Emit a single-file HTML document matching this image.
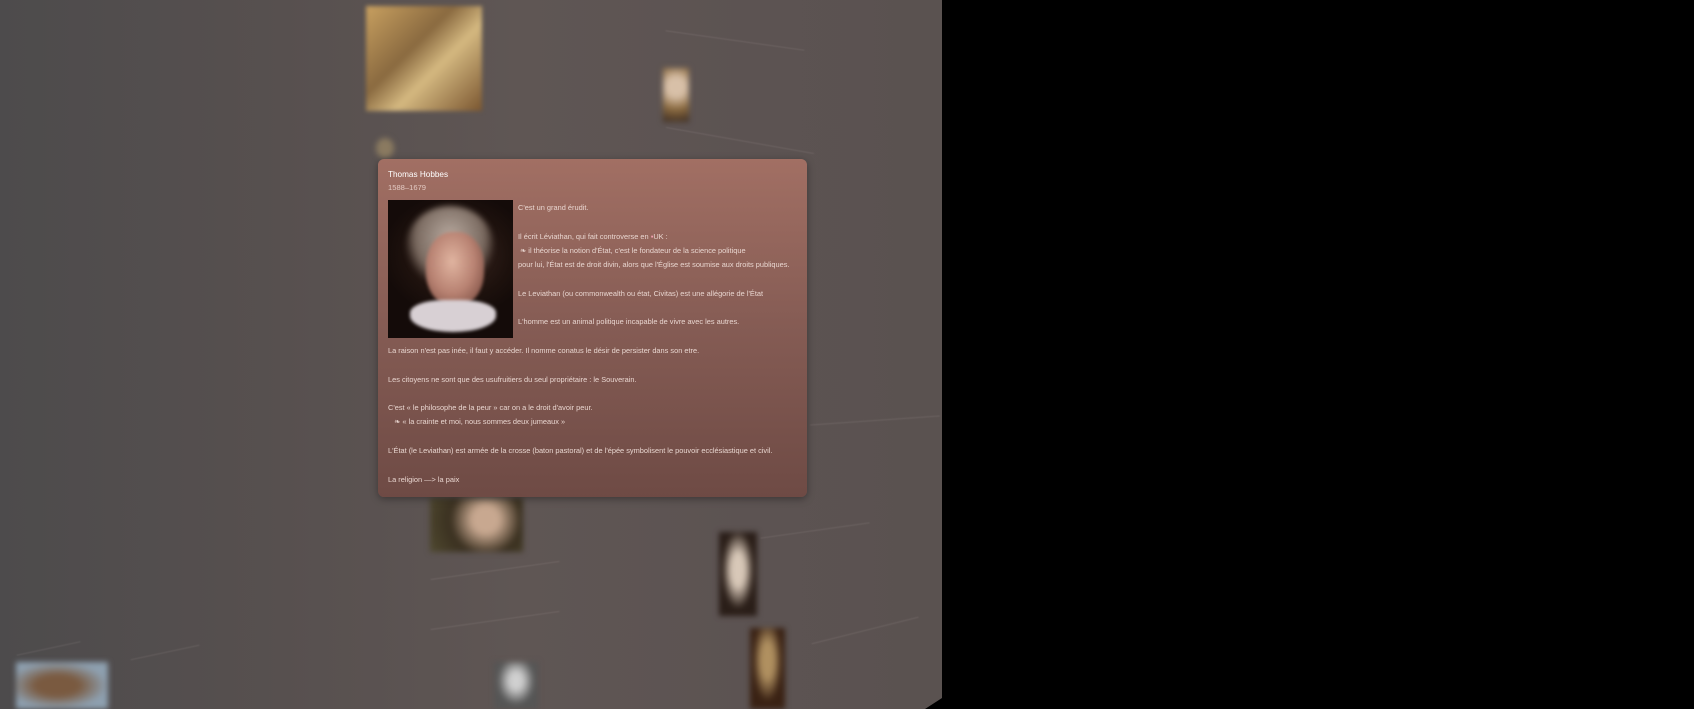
<!DOCTYPE html>
<html><head><meta charset="utf-8"><style>
html,body{margin:0;padding:0;background:#000;width:1694px;height:709px;overflow:hidden;font-family:"Liberation Sans",sans-serif}
#page{position:absolute;left:0;top:0;width:942px;height:709px;overflow:hidden;
 background:linear-gradient(90deg,#4d4b4c 0%,#57504f 30%,#5f5654 55%,#5c5352 80%,#5a5250 100%);
 clip-path:polygon(0 0,942px 0,942px 698px,925px 709px,0 709px)}
.b{position:absolute;filter:blur(3px)}
.t{position:absolute;height:1px;background:rgba(210,195,190,.13);filter:blur(0.6px)}
#card{position:absolute;left:378px;top:159px;width:429px;height:338px;border-radius:6px;
 background:linear-gradient(180deg,rgba(164,112,100,.97) 0%,rgba(135,92,84,.95) 50%,rgba(111,74,68,.96) 100%);
 color:#e9d6d0;font-size:7.4px;line-height:14.3px;box-shadow:0 2px 8px rgba(0,0,0,.35)}
#card .in{position:absolute;left:10px;top:10px;right:8px}
.h{color:#fff;font-size:8.2px;line-height:12px}
.d{color:#e3c9c2;font-size:7.6px;line-height:13px}
#ph{float:left;width:125px;height:138px;margin:6px 5px 2px 0;position:relative;overflow:hidden;
 background:radial-gradient(ellipse 60% 45% at 55% 40%,#3a2620 0%,#1d110d 70%,#140b09 100%)}
p{margin:0}
</style></head><body>
<div id="page">
 <div class="b" style="left:366px;top:6px;width:116px;height:105px;background:linear-gradient(135deg,#c8a060,#8a6a40 40%,#d4b880 60%,#7a5630);filter:blur(2px)"></div>
 <div class="b" style="left:663px;top:68px;width:26px;height:54px;background:radial-gradient(circle at 50% 35%,#d8c0a8 0 25%,#8a6a40 60%,#3a2a20)"></div>
 <div class="b" style="left:376px;top:138px;width:18px;height:20px;background:#8a7a60;border-radius:50%"></div>
 <div class="b" style="left:430px;top:498px;width:93px;height:54px;background:radial-gradient(circle at 60% 40%,#c8a890 0 20%,#3a3020 55%,#504a30)"></div>
 <div class="b" style="left:719px;top:532px;width:38px;height:84px;background:radial-gradient(ellipse at 50% 45%,#d8c8b8 0 25%,#2a1e18 60%)"></div>
 <div class="b" style="left:750px;top:628px;width:35px;height:81px;background:radial-gradient(ellipse at 50% 40%,#b09060 0 25%,#3a2214 60%)"></div>
 <div class="b" style="left:494px;top:662px;width:44px;height:47px;background:radial-gradient(ellipse at 50% 40%,#d0d0d0 0 20%,#555 60%)"></div>
 <div class="b" style="left:16px;top:662px;width:92px;height:47px;background:radial-gradient(ellipse at 45% 50%,#7a5a40 0 30%,#8ea0b0 70%)"></div>
 <div class="t" style="left:16px;top:648px;width:65px;transform:rotate(-12deg)"></div>
 <div class="t" style="left:130px;top:652px;width:70px;transform:rotate(-12deg)"></div>
 <div class="t" style="left:665px;top:40px;width:140px;transform:rotate(8deg)"></div>
 <div class="t" style="left:665px;top:140px;width:150px;transform:rotate(10deg)"></div>
 <div class="t" style="left:430px;top:570px;width:130px;transform:rotate(-8deg)"></div>
 <div class="t" style="left:430px;top:620px;width:130px;transform:rotate(-8deg)"></div>
 <div class="t" style="left:810px;top:630px;width:110px;transform:rotate(-14deg)"></div>
 <div class="t" style="left:760px;top:530px;width:110px;transform:rotate(-8deg)"></div>
 <div class="t" style="left:810px;top:420px;width:130px;transform:rotate(-4deg)"></div>
</div>
<div id="card"><div class="in">
 <div class="h">Thomas Hobbes</div>
 <div class="d">1588–1679</div>
 <div id="ph">
  <div style="position:absolute;left:18px;top:6px;width:88px;height:80px;border-radius:50%;background:radial-gradient(ellipse at 50% 40%,#b8aaa0 0%,#7a6a60 55%,transparent 75%);filter:blur(3px)"></div>
  <div style="position:absolute;left:38px;top:32px;width:58px;height:74px;border-radius:45%;background:radial-gradient(ellipse at 45% 40%,#e0b4a0 0%,#b88272 50%,#6a3e34 100%);filter:blur(1.5px)"></div>
  <div style="position:absolute;left:22px;top:100px;width:86px;height:32px;border-radius:40% 40% 50% 50%;background:#d8d0d4;filter:blur(1.5px)"></div>
 </div>
 <p style="padding-top:7px">C'est un grand érudit.</p><p>&nbsp;</p>
 <p>Il écrit Léviathan, qui fait controverse en <span style="color:#f0a0b0">▪</span>UK :</p>
 <p>&nbsp;❧ il théorise la notion d'État, c'est le fondateur de la science politique</p>
 <p>pour lui, l'État est de droit divin, alors que l'Église est soumise aux droits publiques.</p><p>&nbsp;</p>
 <p>Le Leviathan (ou commonwealth ou état, Civitas) est une allégorie de l'État</p><p>&nbsp;</p>
 <p>L'homme est un animal politique incapable de vivre avec les autres.</p><p>&nbsp;</p>
 <p style="clear:both">La raison n'est pas inée, il faut y accéder. Il nomme conatus le désir de persister dans son etre.</p><p>&nbsp;</p>
 <p>Les citoyens ne sont que des usufruitiers du seul propriétaire : le Souverain.</p><p>&nbsp;</p>
 <p>C'est « le philosophe de la peur » car on a le droit d'avoir peur.</p>
 <p>&nbsp;&nbsp;&nbsp;❧ « la crainte et moi, nous sommes deux jumeaux »</p><p>&nbsp;</p>
 <p>L'État (le Leviathan) est armée de la crosse (baton pastoral) et de l'épée symbolisent le pouvoir ecclésiastique et civil.</p><p>&nbsp;</p>
 <p>La religion —&gt; la paix</p>
</div></div>
</body></html>
